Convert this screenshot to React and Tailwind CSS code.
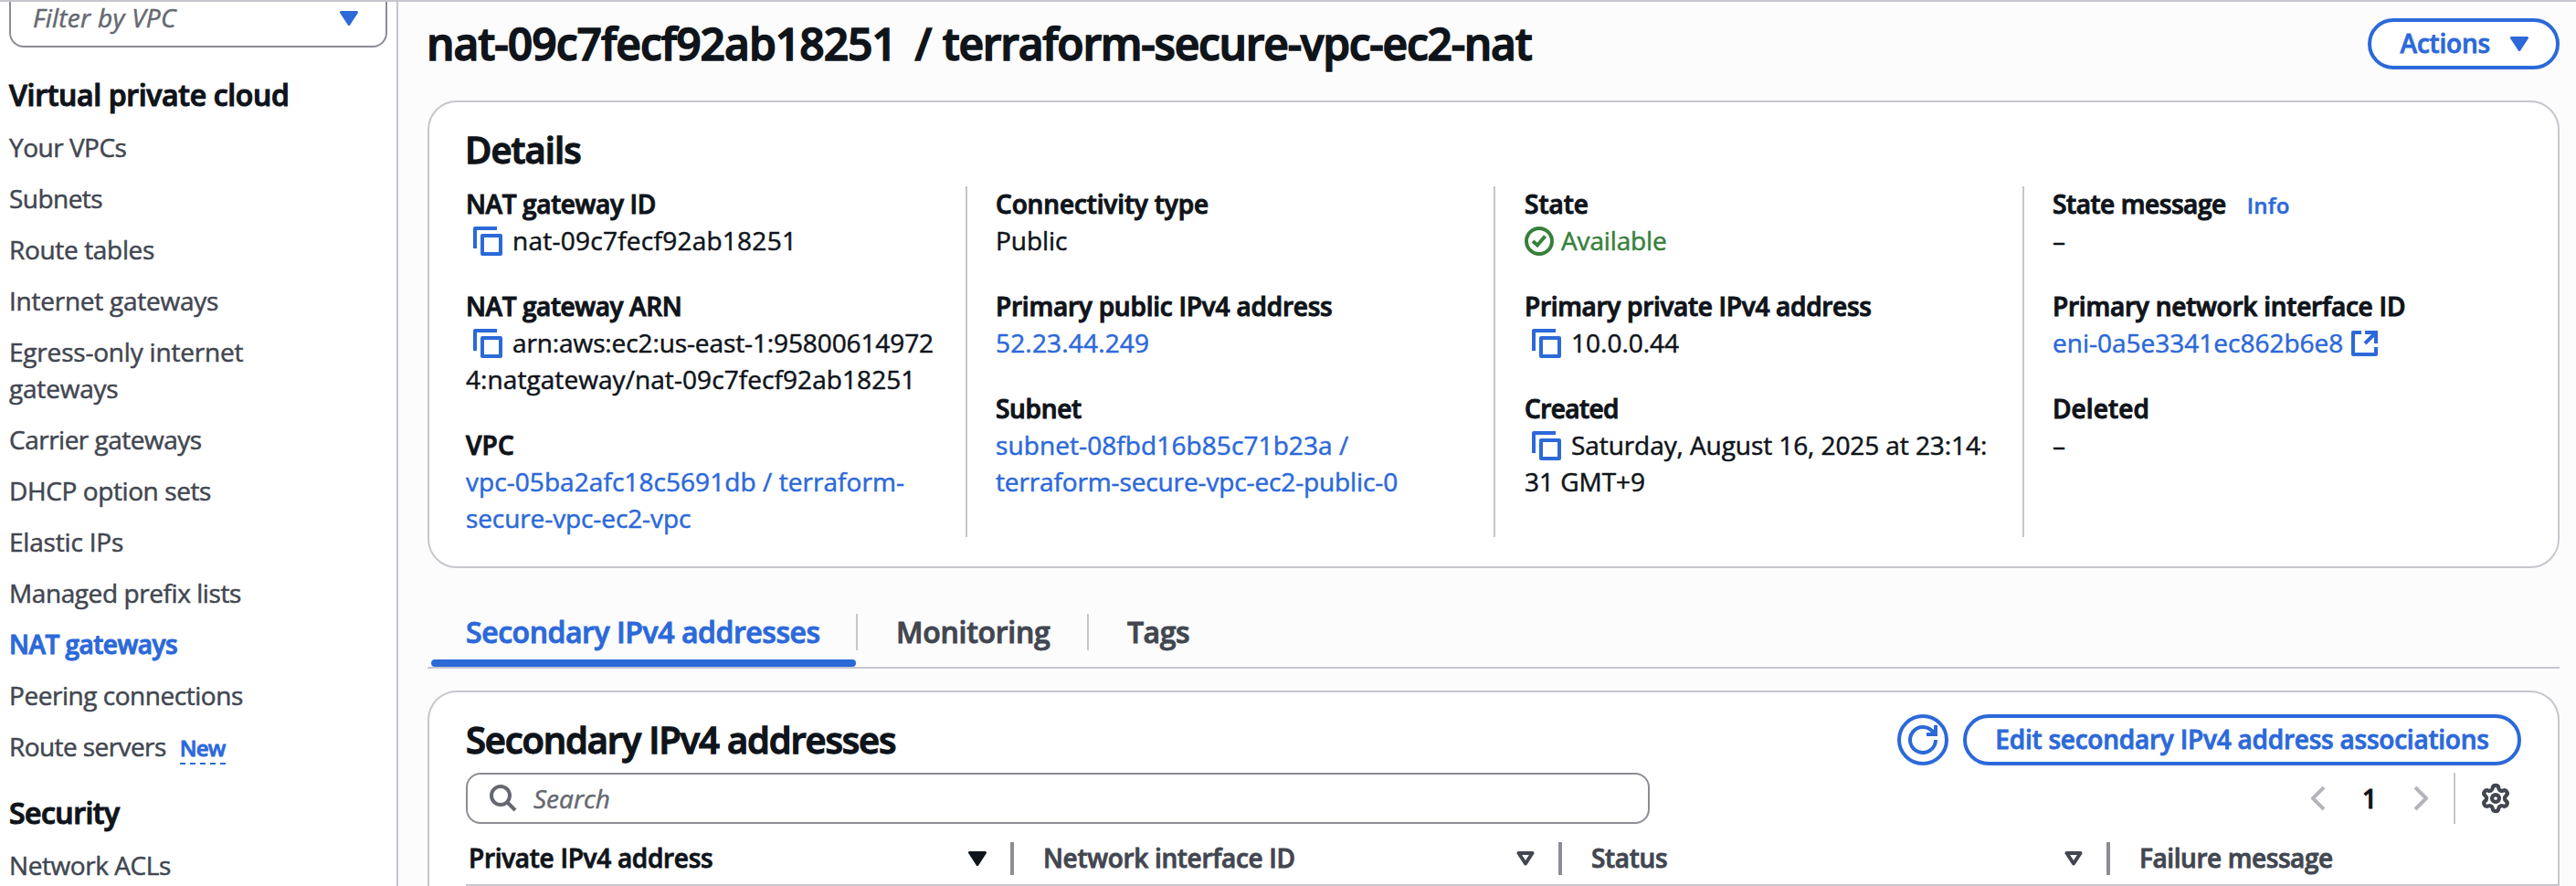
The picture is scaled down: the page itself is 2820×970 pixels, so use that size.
import React from "react";

const CopyIcon = () => (
  <svg className="ml-[8px] mr-[11px] mt-[5px] h-8 w-8 shrink-0 text-[#2c69d9]" viewBox="0 0 32 32" fill="none" stroke="currentColor" strokeWidth="4" strokeLinejoin="round">
    <path d="M2 24V2H26" />
    <path d="M10 10H30V30H10Z" />
  </svg>
);

const CheckIcon = () => (
  <svg className="mr-[8px] mt-[5px] h-8 w-8 shrink-0" viewBox="0 0 32 32" fill="none" stroke="currentColor" strokeWidth="4">
    <circle cx="16" cy="16" r="14" />
    <path d="M9 16L14 20.5L22.5 10.5" />
  </svg>
);

const ExternalIcon = () => (
  <svg className="ml-[9px] mt-[7px] h-7 w-[29px] shrink-0" viewBox="0 0 29 28" fill="none" stroke="currentColor" strokeWidth="4" strokeLinejoin="round">
    <path d="M11 2H2V26H27V18" />
    <path d="M15 2H27V14" strokeLinejoin="miter" />
    <path d="M26.5 2.5L15 14" />
  </svg>
);

const Caret = ({ className = "", hollow = false }) => (
  <svg className={"h-4 w-5 shrink-0 " + className} viewBox="0 0 20 16" fill={hollow ? "none" : "currentColor"} stroke="currentColor" strokeWidth={hollow ? 4 : 3} strokeLinejoin="round">
    <path d={hollow ? "M2.5 2H17.5L10 13.5Z" : "M1.5 1.5H18.5L10 14.5Z"} />
  </svg>
);

const RefreshIcon = () => (
  <svg className="h-8 w-8" viewBox="0 0 32 32" fill="none" stroke="currentColor" strokeWidth="4">
    <path d="M30 16A14 14 0 1 1 28 8.8" />
    <path d="M30 0V10H20" />
  </svg>
);

const SearchIcon = () => (
  <svg className="ml-[24px] h-[30px] w-[30px]" viewBox="0 0 30 30" fill="none" stroke="currentColor" strokeWidth="4">
    <circle cx="12" cy="12" r="10" />
    <path d="M19 19L28 28" />
  </svg>
);

const GearIcon = () => (
  <svg className="h-[34px] w-[34px]" viewBox="0 0 24 24" fill="none" stroke="currentColor" strokeWidth="3" strokeLinejoin="round">
    <path d="M9.671 4.136a2.34 2.34 0 0 1 4.659 0 2.34 2.34 0 0 0 3.319 1.915 2.34 2.34 0 0 1 2.33 4.033 2.34 2.34 0 0 0 0 3.831 2.34 2.34 0 0 1-2.33 4.033 2.34 2.34 0 0 0-3.319 1.915 2.34 2.34 0 0 1-4.659 0 2.34 2.34 0 0 0-3.32-1.915 2.34 2.34 0 0 1-2.33-4.033 2.34 2.34 0 0 0 0-3.831A2.34 2.34 0 0 1 6.35 6.051a2.34 2.34 0 0 0 3.319-1.915" />
    <circle cx="12" cy="12" r="2.8" />
  </svg>
);

const Chevron = ({ flip = false }) => (
  <svg className={"h-[28px] w-4 text-[#b4b4bb] " + (flip ? "-scale-x-100" : "")} viewBox="0 0 16 28" fill="none" stroke="currentColor" strokeWidth="4" strokeLinejoin="round">
    <path d="M14 2L2 14L14 26" />
  </svg>
);

const navItems = [
  ["Your VPCs", "tracking-[-0.5px]"],
  ["Subnets", "tracking-[-0.55px]"],
  ["Route tables", "tracking-[-0.34px]"],
  ["Internet gateways", "tracking-[-0.25px]"],
  ["Egress-only internet gateways", "tracking-[-0.2px]"],
  ["Carrier gateways", "tracking-[-0.5px]"],
  ["DHCP option sets", "tracking-[-0.4px]"],
  ["Elastic IPs", "tracking-[-0.19px]"],
  ["Managed prefix lists", "tracking-[-0.42px]"],
  ["NAT gateways", "tracking-[-0.51px] font-semibold text-[#2c69d9] [-webkit-text-stroke:1px]"],
  ["Peering connections", "tracking-[-0.46px]"],
];

const Sidebar = () => (
  <aside className="flex w-[436px] shrink-0 flex-col border-r-2 border-[#c6c6cd] bg-white pl-[10px] text-[#424650]">
    <div className="flex h-[50px] w-[414px] items-start rounded-b-2xl border-2 border-t-0 border-[#8c8c94] pl-[24px] pr-[30px]">
      <span className="-mt-[3px] grow tracking-[0.28px] text-[#656871] italic">Filter by VPC</span>
      <Caret className="mt-[10px] text-[#2c69d9]" />
    </div>
    <h2 className="mt-[32px] text-[32px] font-semibold tracking-[-0.34px] text-[#0f141a] [-webkit-text-stroke:1.1px]">Virtual private cloud</h2>
    <ul className="mt-[17px] flex flex-col gap-4">
      {navItems.map(([label, style]) => (
        <li key={label} className={"w-[300px] " + style}>{label}</li>
      ))}
      <li className="flex items-baseline">
        <span className="tracking-[-0.58px]">Route servers</span>
        <span className="ml-[15px] border-b-2 border-dashed border-[#2c69d9] text-[24px] leading-[32px] font-semibold tracking-[-0.81px] text-[#2c69d9] [-webkit-text-stroke:0.8px]">New</span>
      </li>
    </ul>
    <h2 className="mt-[33px] text-[32px] font-semibold tracking-[-0.52px] text-[#0f141a] [-webkit-text-stroke:1.1px]">Security</h2>
    <ul className="mt-[17px]">
      <li className="tracking-[-0.43px]">Network ACLs</li>
    </ul>
  </aside>
);

const Field = ({ label, track, children }) => (
  <div>
    <div className={"flex h-10 items-baseline font-semibold [-webkit-text-stroke:1px] " + track}>{label}</div>
    {children}
  </div>
);

const Column = ({ children, className = "" }) => (
  <div className={"h-[384px] " + className}>
    <div className="-mt-px flex flex-col gap-8">{children}</div>
  </div>
);

const Details = () => (
  <section className="h-[512px] shrink-0 rounded-[32px] border-2 border-[#c6c6cd] bg-white px-[40px] pt-[28px]">
    <h2 className="-ml-px text-[40px] leading-[48px] font-semibold tracking-[-0.9px] [-webkit-text-stroke:1.3px]">Details</h2>
    <div className="mt-[16px] grid grid-cols-[547px_578px_579px_1fr] whitespace-nowrap">
      <Column>
        <Field label="NAT gateway ID" track="tracking-[-0.36px]">
          <div className="flex tracking-[0.25px]"><CopyIcon />nat-09c7fecf92ab18251</div>
        </Field>
        <Field label="NAT gateway ARN" track="tracking-[-0.4px]">
          <div className="flex tracking-[-0.11px]"><CopyIcon />arn:aws:ec2:us-east-1:95800614972</div>
          <div className="tracking-[0.07px]">4:natgateway/nat-09c7fecf92ab18251</div>
        </Field>
        <Field label="VPC" track="tracking-[0.17px]">
          <div className="text-[#2c69d9]">
            <span className="tracking-[0.06px]">vpc-05ba2afc18c5691db / terraform-</span><br />
            <span className="tracking-[-0.1px]">secure-vpc-ec2-vpc</span>
          </div>
        </Field>
      </Column>
      <Column className="border-l-2 border-[#c6c6cd] pl-[31px]">
        <Field label="Connectivity type" track="tracking-[-0.12px]">
          <div className="tracking-[-0.06px]">Public</div>
        </Field>
        <Field label="Primary public IPv4 address" track="tracking-[-0.22px]">
          <div className="tracking-[0.17px] text-[#2c69d9]">52.23.44.249</div>
        </Field>
        <Field label="Subnet" track="tracking-[-0.31px]">
          <div className="text-[#2c69d9]">
            <span className="tracking-[0.09px]">subnet-08fbd16b85c71b23a /</span><br />
            <span className="tracking-[-0.13px]">terraform-secure-vpc-ec2-public-0</span>
          </div>
        </Field>
      </Column>
      <Column className="border-l-2 border-[#c6c6cd] pl-[32px]">
        <Field label="State" track="">
          <div className="flex tracking-[-0.14px] text-[#37803a]"><CheckIcon />Available</div>
        </Field>
        <Field label="Primary private IPv4 address" track="tracking-[-0.3px]">
          <div className="flex"><CopyIcon />10.0.0.44</div>
        </Field>
        <Field label="Created" track="tracking-[-0.57px]">
          <div className="flex tracking-[-0.08px]"><CopyIcon />Saturday, August 16, 2025 at 23:14:</div>
          <div className="tracking-[-0.04px]">31 GMT+9</div>
        </Field>
      </Column>
      <Column className="border-l-2 border-[#c6c6cd] pl-[31px]">
        <Field
          label={<>State message<span className="ml-[23px] text-[24px] tracking-[0.25px] text-[#2c69d9] [-webkit-text-stroke:0.5px]">Info</span></>}
          track="tracking-[-0.42px]"
        >
          <div>–</div>
        </Field>
        <Field label="Primary network interface ID" track="tracking-[-0.22px]">
          <div className="flex text-[#2c69d9]">eni-0a5e3341ec862b6e8<ExternalIcon /></div>
        </Field>
        <Field label="Deleted" track="tracking-[0.1px]">
          <div>–</div>
        </Field>
      </Column>
    </div>
  </section>
);

const Tabs = () => (
  <nav className="mt-[50px] flex h-[60px] shrink-0 border-b-2 border-[#c6c6cd] pl-[4px] text-[32px] font-semibold whitespace-nowrap text-[#424650] [-webkit-text-stroke:0.9px]">
    <div className="flex w-[465px] flex-col justify-between text-[#2c69d9]">
      <span className="pl-[38px] tracking-[-0.45px]">Secondary IPv4 addresses</span>
      <span className="h-2 rounded-full bg-[#2c69d9]" />
    </div>
    <div className="h-10 w-[255px] border-x-2 border-[#c6c6cd] pl-[42px] tracking-[-0.28px]">Monitoring</div>
    <div className="pl-[42px] tracking-[-0.46px]">Tags</div>
  </nav>
);

const HeaderCell = ({ label, track, hollow = true, last = false }) => (
  <div className={"flex pt-[20px] " + track}>
    <span className="-mt-[3px] grow">{label}</span>
    {!last && <Caret hollow={hollow} className="mt-[10px]" />}
    {!last && <span className="ml-[26px] h-9 w-1 bg-[#8c8c94]" />}
  </div>
);

const Addresses = () => (
  <section className="mt-[24px] h-[400px] shrink-0 rounded-t-[32px] border-2 border-b-0 border-[#c6c6cd] bg-white pt-[24px] pl-[40px] font-semibold [-webkit-text-stroke:0.8px]">
    <div className="flex h-14 items-center pr-[40px] whitespace-nowrap">
      <h2 className="grow text-[40px] leading-[48px] tracking-[-1.16px] [-webkit-text-stroke:1.3px]">Secondary IPv4 addresses</h2>
      <button className="flex h-14 w-14 items-center justify-center rounded-full border-4 border-[#2c69d9] text-[#2c69d9]">
        <RefreshIcon />
      </button>
      <button className="ml-[16px] h-14 w-[611px] rounded-full border-4 border-[#2c69d9] pb-[2px] tracking-[-0.23px] text-[#2c69d9]">
        Edit secondary IPv4 address associations
      </button>
    </div>
    <div className="mt-[8px] flex h-14 items-center pr-[13px]">
      <div className="flex h-14 w-[1296px] items-center rounded-2xl border-2 border-[#8c8c94] text-[#656871]">
        <SearchIcon />
        <span className="ml-[18px] font-normal italic [-webkit-text-stroke:0.5px]">Search</span>
      </div>
      <div className="ml-[724px] flex w-[128px] items-center justify-between">
        <Chevron />
        <span>1</span>
        <Chevron flip />
      </div>
      <div className="ml-[28px] flex h-14 items-center border-l-2 border-[#c6c6cd] pl-[27px] text-[#424650]">
        <GearIcon />
      </div>
    </div>
    <div className="grid h-[68px] grid-cols-[600px_600px_600px_1fr] border-b-2 border-[#c6c6cd] text-[#424650]">
      <HeaderCell label="Private IPv4 address" track="pl-[3px] tracking-[-0.3px] text-[#0f141a]" hollow={false} />
      <HeaderCell label="Network interface ID" track="pl-[32px] tracking-[-0.32px]" />
      <HeaderCell label="Status" track="pl-[32px] tracking-[-0.31px]" />
      <HeaderCell label="Failure message" track="pl-[32px] tracking-[-0.42px]" last />
    </div>
  </section>
);

export default function App() {
  return (
    <div className="flex h-[970px] w-full overflow-hidden border-t-2 border-[#c6c6cd] bg-[#fcfcfd] font-['Open_Sans',sans-serif] text-[28px] leading-[40px] text-[#0f141a] [-webkit-text-stroke:0.5px]">
      <Sidebar />
      <main className="flex grow flex-col pr-[18px] pl-[32px]">
        <header className="flex h-[108px] shrink-0 items-start justify-between pt-[18px]">
          <h1 className="-ml-px text-[48px] leading-[56px] font-semibold tracking-[-1px] [-webkit-text-stroke:1.5px]">
            nat-09c7fecf92ab18251<span className="ml-[9px]"> / </span><span className="ml-px tracking-[-1.27px]">terraform-secure-vpc-ec2-nat</span>
          </h1>
          <button className="flex h-14 items-center rounded-full border-4 border-[#2c69d9] bg-white pr-[30px] pl-[32px] font-semibold text-[#2c69d9] [-webkit-text-stroke:0.8px]">
            <span className="-mt-[2px] mr-[22px] tracking-[-0.2px]">Actions</span>
            <Caret />
          </button>
        </header>
        <Details />
        <Tabs />
        <Addresses />
      </main>
    </div>
  );
}
